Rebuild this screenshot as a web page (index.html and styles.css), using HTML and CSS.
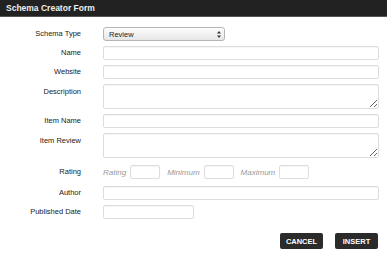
FILE: index.html
```html
<!DOCTYPE html>
<html lang="en">
<head>
    <meta charset="UTF-8">
    <meta name="viewport" content="width=device-width, initial-scale=1.0">
    <title>Schema Creator Form</title>
    <link rel="stylesheet" href="styles.css">
</head>
<body>
<div class="title-bar">Schema Creator Form</div>

<!-- Form fields -->
<form class="schema-form">
    <label class="field-label">Schema Type</label>
    <div class="select-wrap">
        <select class="field-select">
            <option>Review</option>
        </select>
        <svg class="select-arrows" width="4" height="7" viewBox="0 0 4 7">
            <path d="M2 0 L4 2.6 L0 2.6 Z M2 7 L4 4.4 L0 4.4 Z" fill="#333"/>
        </svg>
    </div>

    <label class="field-label">Name</label>
    <input type="text" class="field-input">

    <label class="field-label">Website</label>
    <input type="text" class="field-input">

    <label class="field-label label-top">Description</label>
    <textarea class="field-area"></textarea>

    <label class="field-label">Item Name</label>
    <input type="text" class="field-input">

    <label class="field-label label-top">Item Review</label>
    <textarea class="field-area"></textarea>

    <label class="field-label rating-label">Rating</label>
    <div class="rating-row">
        <span class="rating-text">Rating</span>
        <input type="text" class="field-input small-input">
        <span class="rating-text">Minimum</span>
        <input type="text" class="field-input small-input">
        <span class="rating-text">Maximum</span>
        <input type="text" class="field-input small-input">
    </div>

    <label class="field-label">Author</label>
    <input type="text" class="field-input">

    <label class="field-label">Published Date</label>
    <input type="text" class="field-input date-input">

    <div class="form-buttons">
        <button type="button" class="dark-button">CANCEL</button>
        <button type="button" class="dark-button">INSERT</button>
    </div>
</form>
</body>
</html>
```

FILE: styles.css
```css
body {
    margin: 0;
    background: #fff;
    font-family: "Liberation Sans", Arial, sans-serif;
    color: #222;
}

/* Barra de titulo */
.title-bar {
    height: 16px;
    line-height: 16px;
    background: #222;
    border-bottom: 1px solid #555;
    color: #eee;
    font-size: 8.5px;
    font-weight: bold;
    padding-left: 6px;
}

.schema-form {
    display: grid;
    grid-template-columns: 81px 1fr;
    column-gap: 22px;
    row-gap: 5px;
    padding: 10px 8px 0 0;
}

.field-label {
    display: block;
    font-size: 7.5px;
    line-height: 14px;
    text-align: right;
    color: #222;
}

.label-top {
    line-height: 10px;
    padding-top: 3px;
}

.field-input,
.field-area {
    display: block;
    box-sizing: border-box;
    height: 14px;
    margin: 0;
    padding: 0 3px;
    border: 1px solid #ddd;
    border-radius: 2px;
    box-shadow: inset 0 1px 1px rgba(0, 0, 0, 0.04);
    background: #fff;
    font-family: inherit;
    font-size: 7.5px;
}

.field-area {
    height: 25px;
    resize: vertical;
}

/* Select */
.select-wrap {
    position: relative;
    width: 122px;
    height: 14px;
}

.field-select {
    display: block;
    appearance: none;
    -webkit-appearance: none;
    box-sizing: border-box;
    width: 100%;
    height: 14px;
    margin: 0;
    padding: 0 0 0 5px;
    border: 1px solid #b5b5b5;
    border-radius: 3px;
    background: linear-gradient(#fdfdfd, #e6e6e6);
    font-family: inherit;
    font-size: 7.5px;
    color: #222;
}

.select-arrows {
    position: absolute;
    right: 4px;
    top: 4px;
}

/* Fila de rating */
.rating-label {
    margin: 2px 0;
}

.rating-row {
    display: flex;
    align-items: center;
    margin: 2px 0;
}

.rating-text {
    font-size: 8px;
    font-style: italic;
    color: #999;
    margin-right: 4px;
}

.small-input {
    width: 30px;
    margin-right: 7px;
}

.date-input {
    width: 91px;
}

/* Botones */
.form-buttons {
    grid-column: 1 / 3;
    display: flex;
    justify-content: flex-end;
    gap: 12px;
    margin-top: 9px;
    padding-right: 1px;
}

.dark-button {
    width: 43px;
    height: 16px;
    padding: 0;
    border: none;
    border-radius: 2px;
    background: #2b2b2b;
    color: #fff;
    font-family: inherit;
    font-size: 7.5px;
    font-weight: bold;
}
```
